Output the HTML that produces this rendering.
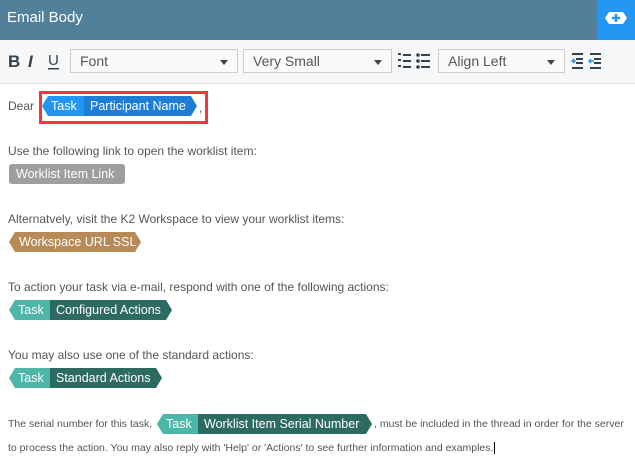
<!DOCTYPE html>
<html><head><meta charset="utf-8"><style>
*{margin:0;padding:0;box-sizing:border-box}
body{width:635px;height:470px;overflow:hidden;background:#fff;font-family:"Liberation Sans",sans-serif;position:relative;color:#555}
.hdr{position:absolute;left:0;top:0;width:635px;height:40px;background:#52809a}
.hdr span{position:absolute;left:7px;top:9px;color:#fff;font-size:15px}
.btn{position:absolute;left:597px;top:0;width:38px;height:40px;background:#2196f3}
.tb{position:absolute;left:0;top:40px;width:635px;height:44px;background:#f7f7f7;border-bottom:1px solid #ddd}
.sel{position:absolute;top:9px;height:24px;border:1px solid #ccc;background:#fafafa;font-size:14px;color:#555;padding:3px 9px}
.sel:after{content:"";position:absolute;right:9px;top:10px;border:4px solid transparent;border-top:5px solid #444}
.t{position:absolute;left:8px;font-size:12px;white-space:nowrap}
.s{font-size:10.5px}
.b{position:absolute;height:20px;display:flex;color:#fff;font-size:12.5px;line-height:20px;white-space:nowrap}
.b span{display:block;text-align:left;padding-left:6px;overflow:hidden}
.ar{clip-path:polygon(6px 0,calc(100% - 6px) 0,100% 50%,calc(100% - 6px) 100%,6px 100%,0 50%)}
</style></head><body>
<div class="hdr"><span>Email Body</span></div>
<div class="btn"><svg width="38" height="40"><polygon points="8,18 12,12 26,12 30,18 26,24 12,24" fill="#fff"/><path d="M19 14v8M15 18h8" stroke="#2196f3" stroke-width="2.5"/></svg></div>
<div class="tb">
<svg style="position:absolute;left:6px;top:10px" width="60" height="22">
<text x="2" y="17" font-family="Liberation Sans" font-weight="bold" font-size="17" fill="#33434d">B</text>
<text x="22" y="17" font-family="Liberation Sans" font-weight="bold" font-style="italic" font-size="17" fill="#33434d">I</text>
<text x="42" y="15" font-family="Liberation Sans" font-size="15" fill="#33434d">U</text>
<rect x="42" y="18" width="11" height="1.5" fill="#33434d"/></svg>
<div class="sel" style="left:70px;width:168px">Font</div>
<div class="sel" style="left:243px;width:149px">Very Small</div>
<svg style="position:absolute;left:397px;top:11px" width="40" height="20">
<g fill="#33434d"><rect x="1" y="2" width="3" height="2"/><rect x="1" y="8" width="3" height="2"/><rect x="1" y="14" width="3" height="2"/>
<rect x="6" y="3" width="8" height="2"/><rect x="6" y="9" width="8" height="2"/><rect x="6" y="15" width="8" height="2"/>
<circle cx="21" cy="4" r="1.8"/><circle cx="21" cy="10" r="1.8"/><circle cx="21" cy="16" r="1.8"/>
<rect x="24" y="3" width="9" height="2"/><rect x="24" y="9" width="9" height="2"/><rect x="24" y="15" width="9" height="2"/></g></svg>
<div class="sel" style="left:438px;width:127px">Align Left</div>
<svg style="position:absolute;left:570px;top:12px" width="40" height="18">
<g fill="#33434d"><rect x="2" y="1" width="11" height="2"/><rect x="6" y="6" width="7" height="2"/><rect x="6" y="10" width="7" height="2"/><rect x="2" y="15" width="11" height="2"/>
<rect x="20" y="1" width="11" height="2"/><rect x="24" y="6" width="7" height="2"/><rect x="24" y="10" width="7" height="2"/><rect x="20" y="15" width="11" height="2"/></g>
<path d="M1 9h4M3 7l2 2-2 2" stroke="#2196f3" stroke-width="1.5" fill="none"/><path d="M24 9h-5M21 7l-2 2 2 2" stroke="#2196f3" stroke-width="1.5" fill="none"/></svg>
</div>

<div class="t" style="top:99px">Dear</div>
<div style="position:absolute;left:39px;top:91px;width:169px;height:33px;border:3px solid #f2373f"></div>
<div class="b ar" style="left:42px;top:96px"><span style="width:42px;background:#2196f3;padding-left:9px">Task</span><span style="width:113px;background:#1e7ed6">Participant Name</span></div>
<div class="t" style="top:101px;left:199px">,</div>

<div class="t" style="top:144px">Use the following link to open the worklist item:</div>
<div class="b" style="left:9px;top:164px;border-radius:3px;background:#9e9e9e;width:116px"><span style="width:116px;padding-left:7px">Worklist Item Link</span></div>

<div class="t" style="top:212px">Alternatvely, visit the K2 Workspace to view your worklist items:</div>
<div class="b ar" style="left:9px;top:232px;width:132px;background:#b88a57"><span style="width:132px;padding-left:10px">Workspace URL SSL</span></div>

<div class="t" style="top:280px">To action your task via e-mail, respond with one of the following actions:</div>
<div class="b ar" style="left:9px;top:300px"><span style="width:41px;background:#4db6a8;padding-left:9px">Task</span><span style="width:122px;background:#2d6b62">Configured Actions</span></div>

<div class="t" style="top:348px">You may also use one of the standard actions:</div>
<div class="b ar" style="left:9px;top:368px"><span style="width:41px;background:#4db6a8;padding-left:9px">Task</span><span style="width:112px;background:#2d6b62">Standard Actions</span></div>

<div class="t s" style="top:418px">The serial number for this task,</div>
<div class="b ar" style="left:157px;top:414px"><span style="width:41px;background:#4db6a8;padding-left:9px">Task</span><span style="width:174px;background:#2d6b62">Worklist Item Serial Number</span></div>
<div class="t s" style="top:418px;left:374px">, must be included in the thread in order for the server</div>
<div class="t s" style="top:442px">to process the action. You may also reply with 'Help' or 'Actions' to see further information and examples.<span style="border-left:1px solid #000;margin-left:1px"></span></div>
</body></html>
